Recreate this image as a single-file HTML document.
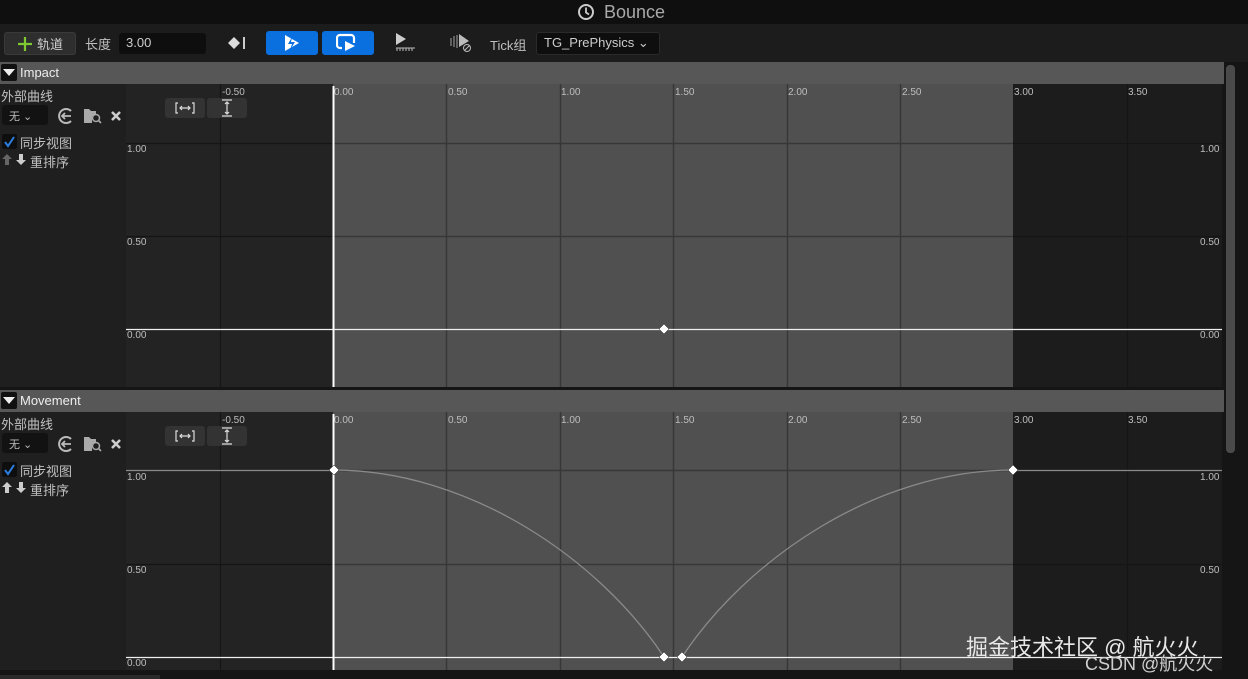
<!DOCTYPE html>
<html><head><meta charset="utf-8"><style>
*{margin:0;padding:0;box-sizing:border-box}
body{width:1248px;height:679px;overflow:hidden;background:#151515;font-family:"Liberation Sans","Noto Sans CJK SC",sans-serif;color:#c8c8c8;position:relative}
.a{position:absolute}
.t{font-size:13px;color:#c0c0c0;white-space:nowrap}
.s{font-size:10px;color:#bdbdbd;white-space:nowrap}
.btn{position:absolute;background:#383838;border-radius:3px}
.blue{position:absolute;background:#0a70e0;border-radius:3px}
</style></head><body>
<div class="a" style="left:0;top:0;width:1248px;height:24px;background:#0f0f0f"></div>
<svg class="a" style="left:577px;top:3px" width="18" height="18" viewBox="0 0 18 18"><circle cx="9" cy="9" r="7" fill="none" stroke="#ccc" stroke-width="2"/><path d="M9 4.5V9.5L12 11.5" fill="none" stroke="#ccc" stroke-width="1.8"/></svg>
<div class="a" style="left:604px;top:2px;font-size:18px;color:#a8a8a8">Bounce</div>
<div class="a" style="left:0;top:24px;width:1248px;height:38px;background:#1c1c1c"></div>
<div class="btn" style="left:4px;top:32px;width:72px;height:23px;background:#2e2e2e;border:1px solid #3a3a3a"></div>
<svg class="a" style="left:17px;top:36px" width="16" height="16"><path d="M8 1V15M1 8H15" stroke="#7ec832" stroke-width="2.2"/></svg>
<div class="a t" style="left:37px;top:34px;color:#d0d0d0">轨道</div>
<div class="a t" style="left:85px;top:34px">长度</div>
<div class="a" style="left:119px;top:33px;width:87px;height:21px;background:#0e0e0e;border-radius:3px"></div>
<div class="a t" style="left:126px;top:35px;color:#ccc">3.00</div>
<svg class="a" style="left:226px;top:34px" width="22" height="18"><path d="M2 9L8 3L14 9L8 15Z" fill="#ddd"/><rect x="17" y="3" width="2" height="12" fill="#ccc"/></svg>
<div class="blue" style="left:266px;top:31px;width:52px;height:24px"></div>
<svg class="a" style="left:282px;top:33px" width="20" height="20"><path d="M3 2L17 10L3 18Z" fill="#fff"/><path d="M10 4L6 11H10L8 17L13 9H9Z" fill="#0a70e0"/></svg>
<div class="blue" style="left:322px;top:31px;width:52px;height:24px"></div>
<svg class="a" style="left:336px;top:33px" width="22" height="20"><path d="M6 15H4A3 3 0 0 1 1 12V5A3 3 0 0 1 4 2H15A3 3 0 0 1 18 5V10" fill="none" stroke="#fff" stroke-width="2.2"/><path d="M9 8L19 13L9 18Z" fill="#fff"/></svg>
<svg class="a" style="left:393px;top:31px" width="24" height="22"><path d="M3 2L13 8L3 14Z" fill="#ccc"/><path d="M3 17H22M4 17V20M7 17V20M10 17V20M13 17V20M16 17V20M19 17V20" stroke="#bbb" stroke-width="1"/></svg>
<svg class="a" style="left:449px;top:32px" width="24" height="22"><path d="M10 2L20 9L10 15Z" fill="#bbb"/><path d="M2 6V14M5 4V15M8 3V16" stroke="#777" stroke-width="1.5"/><circle cx="18" cy="16" r="3.5" fill="none" stroke="#bbb"/><path d="M15.5 18.5L20.5 13.5" stroke="#bbb"/></svg>
<div class="a t" style="left:490px;top:35px">Tick组</div>
<div class="a" style="left:536px;top:32px;width:124px;height:23px;background:#0e0e0e;border:1px solid #2a2a2a;border-radius:3px"></div>
<div class="a t" style="left:544px;top:35px;color:#ccc">TG_PrePhysics ⌄</div>

<div class="a" style="left:0;top:62px;width:1224px;height:22px;background:#575757"></div>
<div class="a" style="left:1px;top:64px;width:16px;height:17px;background:#111;border-radius:2px"></div>
<svg class="a" style="left:3px;top:68px" width="12" height="9"><path d="M0 1H12L6 8Z" fill="#eee"/></svg>
<div class="a t" style="left:20px;top:65px;color:#eee">Impact</div>
<div class="a" style="left:0;top:84px;width:126px;height:303px;background:#1f1f1f"></div>

<div class="a" style="left:0;top:390px;width:1224px;height:22px;background:#575757"></div>
<div class="a" style="left:1px;top:392px;width:16px;height:17px;background:#111;border-radius:2px"></div>
<svg class="a" style="left:3px;top:396px" width="12" height="9"><path d="M0 1H12L6 8Z" fill="#eee"/></svg>
<div class="a t" style="left:20px;top:393px;color:#eee">Movement</div>
<div class="a" style="left:0;top:412px;width:126px;height:267px;background:#1f1f1f"></div>

<div class="a t" style="left:1px;top:86px">外部曲线</div>
<div class="a" style="left:2px;top:105px;width:46px;height:20px;background:#121212;border-radius:3px"></div>
<div class="a" style="left:9px;top:108px;font-size:11px;color:#bbb">无 ⌄</div>
<svg class="a" style="left:57px;top:107px" width="18" height="18"><path d="M14 4A7 7 0 1 0 14 14" fill="none" stroke="#bbb" stroke-width="2"/><path d="M5 9H14M8 6L5 9L8 12" fill="none" stroke="#bbb" stroke-width="1.8"/></svg>
<svg class="a" style="left:83px;top:106px" width="20" height="19"><path d="M1 3H6L8 5H13V10H1Z" fill="#aaa"/><rect x="1" y="5" width="8" height="12" fill="#aaa"/><circle cx="13" cy="12" r="3.5" fill="#1f1f1f" stroke="#aaa" stroke-width="1.5"/><path d="M15.5 14.5L18 17" stroke="#aaa" stroke-width="1.6"/></svg>
<svg class="a" style="left:110px;top:110px" width="12" height="12"><path d="M2 2L10 10M10 2L2 10" stroke="#ccc" stroke-width="2.6"/></svg>
<div class="a" style="left:2px;top:134px;width:15px;height:15px;background:#0e0e0e;border-radius:2px"></div>
<svg class="a" style="left:3px;top:135px" width="13" height="13"><path d="M2 7L5 11L11 2" fill="none" stroke="#2a7de0" stroke-width="2"/></svg>
<div class="a t" style="left:20px;top:133px">同步视图</div>
<svg class="a" style="left:1px;top:153px" width="28" height="13"><path d="M6 1L11 6H8V12H4V6H1Z" fill="#666"/><path d="M20 12L25 7H22V1H18V7H15Z" fill="#ccc"/></svg>
<div class="a t" style="left:30px;top:152px">重排序</div>

<div class="a t" style="left:1px;top:414px">外部曲线</div>
<div class="a" style="left:2px;top:433px;width:46px;height:20px;background:#121212;border-radius:3px"></div>
<div class="a" style="left:9px;top:436px;font-size:11px;color:#bbb">无 ⌄</div>
<svg class="a" style="left:57px;top:435px" width="18" height="18"><path d="M14 4A7 7 0 1 0 14 14" fill="none" stroke="#bbb" stroke-width="2"/><path d="M5 9H14M8 6L5 9L8 12" fill="none" stroke="#bbb" stroke-width="1.8"/></svg>
<svg class="a" style="left:83px;top:434px" width="20" height="19"><path d="M1 3H6L8 5H13V10H1Z" fill="#aaa"/><rect x="1" y="5" width="8" height="12" fill="#aaa"/><circle cx="13" cy="12" r="3.5" fill="#1f1f1f" stroke="#aaa" stroke-width="1.5"/><path d="M15.5 14.5L18 17" stroke="#aaa" stroke-width="1.6"/></svg>
<svg class="a" style="left:110px;top:438px" width="12" height="12"><path d="M2 2L10 10M10 2L2 10" stroke="#ccc" stroke-width="2.6"/></svg>
<div class="a" style="left:2px;top:462px;width:15px;height:15px;background:#0e0e0e;border-radius:2px"></div>
<svg class="a" style="left:3px;top:463px" width="13" height="13"><path d="M2 7L5 11L11 2" fill="none" stroke="#2a7de0" stroke-width="2"/></svg>
<div class="a t" style="left:20px;top:461px">同步视图</div>
<svg class="a" style="left:1px;top:481px" width="28" height="13"><path d="M6 1L11 6H8V12H4V6H1Z" fill="#ccc"/><path d="M20 12L25 7H22V1H18V7H15Z" fill="#ccc"/></svg>
<div class="a t" style="left:30px;top:480px">重排序</div>

<svg class="a" style="left:0;top:0" width="1248" height="679">
 <g>
  <rect x="126" y="84" width="1096" height="303" fill="#232323"/>
  <rect x="333" y="84" width="680" height="303" fill="#505050"/>
  <rect x="1013" y="84" width="209" height="303" fill="#1c1c1c"/>
  <g stroke="#151515" stroke-width="1.2">
   <path d="M220.5 84V387M1127.5 84V387M126 143.5H333M126 236.5H333M1013 143.5H1222M1013 236.5H1222"/>
  </g>
  <g stroke="#373737" stroke-width="1.5">
   <path d="M446.5 84V387M560.5 84V387M673.5 84V387M787.5 84V387M900.5 84V387M333 143.5H1013M333 236.5H1013"/>
  </g>
  <path d="M126 329.5H1222" stroke="#f0f0f0" stroke-width="1.3"/>
  <path d="M333.5 86V387" stroke="#fff" stroke-width="2"/>
  <path d="M664 324L669 329L664 334L659 329Z" fill="#fff" stroke="#222" stroke-width="0.5"/>
 </g>
 <g>
  <rect x="126" y="412" width="1096" height="258" fill="#232323"/>
  <rect x="333" y="412" width="680" height="258" fill="#505050"/>
  <rect x="1013" y="412" width="209" height="258" fill="#1c1c1c"/>
  <g stroke="#151515" stroke-width="1.2">
   <path d="M220.5 412V670M1127.5 412V670M126 564.5H333M1013 564.5H1222"/>
  </g>
  <g stroke="#373737" stroke-width="1.5">
   <path d="M446.5 412V670M560.5 412V670M673.5 412V670M787.5 412V670M900.5 412V670M333 564.5H1013M333 470.5H1013"/>
  </g>
  <path d="M126 470.5H333M1013 470.5H1222" stroke="#8a8a8a" stroke-width="1.3"/>
  <path d="M126 657.5H1222" stroke="#f0f0f0" stroke-width="1.3"/>
  <path d="M333 470 C 470 470, 600 560, 664 657" fill="none" stroke="#8a8a8a" stroke-width="1.3"/>
  <path d="M682 657 C 746 560, 876 470, 1013 470" fill="none" stroke="#8a8a8a" stroke-width="1.3"/>
  <path d="M333.5 414V679" stroke="#fff" stroke-width="2"/>
  <g fill="#fff" stroke="#222" stroke-width="0.5">
   <path d="M334 465L339 470L334 475L329 470Z"/>
   <path d="M664 652L669 657L664 662L659 657Z"/>
   <path d="M682 652L687 657L682 662L677 657Z"/>
   <path d="M1013 465L1018 470L1013 475L1008 470Z"/>
  </g>
 </g>
 <rect x="1226" y="65" width="9" height="388" rx="4" fill="#4a4a4a"/>
 <rect x="0" y="670" width="1248" height="9" fill="#151515"/>
 <rect x="0" y="675" width="160" height="4" fill="#2a2a2a"/>
</svg>

<div class="btn" style="left:165px;top:98px;width:40px;height:20px;background:#333"></div>
<div class="btn" style="left:207px;top:98px;width:40px;height:20px;background:#333"></div>
<svg class="a" style="left:175px;top:101px" width="20" height="14"><path d="M3 2H1V12H3M17 2H19V12H17M5 7H15M7 5L5 7L7 9M13 5L15 7L13 9" fill="none" stroke="#ddd" stroke-width="1.2"/></svg>
<svg class="a" style="left:220px;top:99px" width="14" height="18"><path d="M2 1H12M2 17H12M7 3V15M5 5L7 3L9 5M5 13L7 15L9 13" fill="none" stroke="#ddd" stroke-width="1.2"/></svg>
<div class="btn" style="left:165px;top:426px;width:40px;height:20px;background:#333"></div>
<div class="btn" style="left:207px;top:426px;width:40px;height:20px;background:#333"></div>
<svg class="a" style="left:175px;top:429px" width="20" height="14"><path d="M3 2H1V12H3M17 2H19V12H17M5 7H15M7 5L5 7L7 9M13 5L15 7L13 9" fill="none" stroke="#ddd" stroke-width="1.2"/></svg>
<svg class="a" style="left:220px;top:427px" width="14" height="18"><path d="M2 1H12M2 17H12M7 3V15M5 5L7 3L9 5M5 13L7 15L9 13" fill="none" stroke="#ddd" stroke-width="1.2"/></svg>

<div class="a s" style="left:222px;top:87px">-0.50</div>
<div class="a s" style="left:334px;top:87px">0.00</div>
<div class="a s" style="left:448px;top:87px">0.50</div>
<div class="a s" style="left:561px;top:87px">1.00</div>
<div class="a s" style="left:675px;top:87px">1.50</div>
<div class="a s" style="left:788px;top:87px">2.00</div>
<div class="a s" style="left:902px;top:87px">2.50</div>
<div class="a s" style="left:1014px;top:87px">3.00</div>
<div class="a s" style="left:1128px;top:87px">3.50</div>
<div class="a s" style="left:127px;top:144px">1.00</div>
<div class="a s" style="left:127px;top:237px">0.50</div>
<div class="a s" style="left:127px;top:330px">0.00</div>
<div class="a s" style="left:1200px;top:144px">1.00</div>
<div class="a s" style="left:1200px;top:237px">0.50</div>
<div class="a s" style="left:1200px;top:330px">0.00</div>
<div class="a s" style="left:222px;top:415px">-0.50</div>
<div class="a s" style="left:334px;top:415px">0.00</div>
<div class="a s" style="left:448px;top:415px">0.50</div>
<div class="a s" style="left:561px;top:415px">1.00</div>
<div class="a s" style="left:675px;top:415px">1.50</div>
<div class="a s" style="left:788px;top:415px">2.00</div>
<div class="a s" style="left:902px;top:415px">2.50</div>
<div class="a s" style="left:1014px;top:415px">3.00</div>
<div class="a s" style="left:1128px;top:415px">3.50</div>
<div class="a s" style="left:127px;top:472px">1.00</div>
<div class="a s" style="left:127px;top:565px">0.50</div>
<div class="a s" style="left:127px;top:658px">0.00</div>
<div class="a s" style="left:1200px;top:472px">1.00</div>
<div class="a s" style="left:1200px;top:565px">0.50</div>

<div class="a" style="left:966px;top:630px;font-size:22px;color:#e8e8e8;white-space:nowrap">掘金技术社区 @ 航火火</div>
<div class="a" style="left:1085px;top:650px;font-size:18px;color:#cfcfcf;white-space:nowrap">CSDN @航火火</div>
</body></html>
